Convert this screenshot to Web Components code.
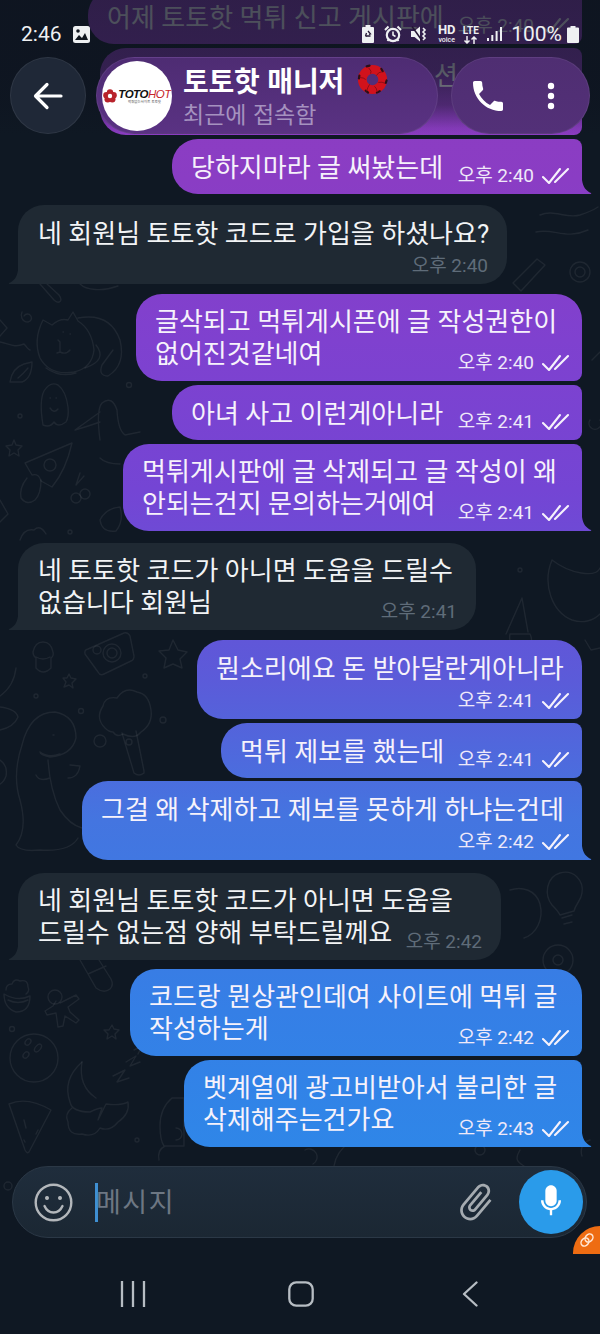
<!DOCTYPE html>
<html lang="ko">
<head>
<meta charset="utf-8">
<title>토토핫 매니저</title>
<style>
  html, body { margin: 0; padding: 0; background: #0f1823; }
  body { width: 600px; height: 1334px; overflow: hidden; font-family: "Noto Sans CJK KR", Roboto, sans-serif; }
</style>
</head>
<body>
<chat-app>
  <chat-bubble side="out" layout="inline" time="오후 2:40" style="width:494px;margin-top:0">어제 토토핫 먹튀 신고 게시판에</chat-bubble>
  <chat-bubble side="out" layout="stack" style="width:482px;margin-top:4px" notime><span style="margin-left:315px">션</span><br>&nbsp;</chat-bubble>
  <chat-bubble side="out" layout="inline" time="오후 2:40" tail style="width:410px;margin-top:4px">당하지마라 글 써놨는데</chat-bubble>

  <chat-bubble side="in" layout="below" time="오후 2:40" tail style="width:489px;margin-top:11px">네 회원님 토토핫 코드로 가입을 하셨나요?</chat-bubble>

  <chat-bubble side="out" layout="stack" time="오후 2:40" first style="width:446px;margin-top:10px">글삭되고 먹튀게시픈에 글 작성권한이<br>없어진것같네여</chat-bubble>
  <chat-bubble side="out" layout="inline" time="오후 2:41" style="width:410px;margin-top:4px">아녀 사고 이런게아니라</chat-bubble>
  <chat-bubble side="out" layout="stack" time="오후 2:41" tail style="width:459px;margin-top:4px">먹튀게시판에 글 삭제되고 글 작성이 왜<br>안되는건지 문의하는거에여</chat-bubble>

  <chat-bubble side="in" layout="stack" time="오후 2:41" tail style="width:458px;margin-top:12px">네 토토핫 코드가 아니면 도움을 드릴수<br>없습니다 회원님</chat-bubble>

  <chat-bubble side="out" layout="below" time="오후 2:41" first style="width:385px;margin-top:10px">뭔소리에요 돈 받아달란게아니라</chat-bubble>
  <chat-bubble side="out" layout="inline" time="오후 2:41" style="width:361px;margin-top:4px">먹튀 제보를 했는데</chat-bubble>
  <chat-bubble side="out" layout="below" time="오후 2:42" tail style="width:500px;margin-top:3px">그걸 왜 삭제하고 제보를 못하게 하냐는건데</chat-bubble>

  <chat-bubble side="in" layout="stack" time="오후 2:42" tail style="width:483px;margin-top:13px">네 회원님 토토핫 코드가 아니면 도움을<br>드릴수 없는점 양해 부탁드릴께요</chat-bubble>

  <chat-bubble side="out" layout="stack" time="오후 2:42" first style="width:452px;margin-top:9px">코드랑 뭔상관인데여 사이트에 먹튀 글<br>작성하는게</chat-bubble>
  <chat-bubble side="out" layout="stack" time="오후 2:43" tail style="width:398px;margin-top:4px">벳계열에 광고비받아서 불리한 글<br>삭제해주는건가요</chat-bubble>
</chat-app>

<template id="tpl-app">
  <style>
    :host { display: flex; flex-direction: column; position: relative; width: 600px; height: 1334px; overflow: hidden; background: #0f1823; color: #fff; font-family: "Noto Sans CJK KR", Roboto, sans-serif; }
    .list { flex: 1; min-height: 0; position: relative; display: flex; flex-direction: column; justify-content: flex-end; padding: 0 18px 19px; box-sizing: border-box; overflow: hidden; }
    .dim { position: absolute; left: 0; right: 0; top: 0; height: 136px; background: linear-gradient(to bottom, rgba(14,20,32,.74) 0, rgba(14,20,32,.70) 70px, rgba(14,20,32,.5) 105px, rgba(14,20,32,.08) 128px, rgba(14,20,32,0) 136px); }
    .tab { position: absolute; right: 0; top: 1226px; width: 27px; height: 28px; background: #ee6c12; border-radius: 28px 0 0 0; display: flex; align-items: center; justify-content: center; }
  </style>
  <chat-wallpaper></chat-wallpaper>
  <div class="list"><slot></slot></div>
  <chat-input></chat-input>
  <nav-bar></nav-bar>
  <div class="dim"></div>
  <status-bar></status-bar>
  <chat-header></chat-header>
  <div class="tab">
    <svg width="18" height="18" viewBox="0 0 18 18" fill="none" stroke="#ffe9d8" stroke-width="1.5"><ellipse cx="7" cy="11" rx="3.6" ry="4.4" transform="rotate(40 7 11)"/><ellipse cx="11" cy="7" rx="3.6" ry="4.4" transform="rotate(40 11 7)"/></svg>
  </div>
</template>

<template id="tpl-wallpaper">
  <style>
    :host { position: absolute; inset: 0; display: block; pointer-events: none; }
    svg { display: block; }
  </style>
  <svg width="600" height="1334" viewBox="0 0 600 1334" fill="none" stroke="#fff" stroke-opacity=".065" stroke-width="1.4" stroke-linecap="round" stroke-linejoin="round">
    <!-- top left scraps -->
    <path d="M40 284l14 16c4 4 10 2 5-5l-12-11"/><path d="M80 284c6 6 22 8 38 2"/>
    <path d="M24 316a4 4 0 1 1 4 6c-6 0-8-6-6-10"/><path d="M0 342c10 2 14 6 24 2 4 4 3 5 6 6"/><path d="M0 320l7 8-7 8"/>
    <!-- cat -->
    <path d="M43 320l9 5q8-7 16-5l5-8 5 9q14 9 16 29-2 18-20 22-24 4-34-14-7-18 3-38z"/><path d="M78 318q32-6 42 22 6 25-12 36-10 0-6-11l11-15M96 345q12 15-11 23M46 368q14 10 30 5"/><path d="M58 340l2 2v10l-3 1M60 352q6 3 10-2M63 332h.5M70 334h.5"/>
    <!-- leaf, ghost, bird -->
    <path d="M10 382q2-14 14-18l8-2q0 16-10 20zM18 378q5-4 10-10"/>
    <path d="M43 425q-4-24 1-34 6-10 14-6 8 6 10 22 1 10-2 15-8 6-12 0-4 6-11 3zM50 398h.5M56 398h.5M50 408q4 6 8 1"/>
    <path d="M100 440q-4-30 2-37 10-8 15 7 1 20 8 25l15-3M100 412L75 430q14-4 25-8M100 458q6 6 20 6"/>
    <circle cx="20" cy="416" r="2"/><circle cx="129" cy="385" r="2.5"/><circle cx="70" cy="532" r="2"/>
    <!-- pizza, cherry, star -->
    <path d="M25 463l47-20q-6 27-20 44l-11-6q-2-8-9-6-3-5-7-12z"/><circle cx="50" cy="465" r="6"/><path d="M27 478q-8 10-6 20 6 8 14 2 6-6 6-20"/>
    <path d="M80 473l-4 12M84 476l-8 9"/><circle cx="76" cy="498" r="5"/><circle cx="85" cy="494" r="5"/>
    <path d="M14 440l2 5 6 1-4 4 1 6-5-3-5 3 1-6-4-4 6-1z"/>
    <path d="M100 520q6-12 20-13 4 14-4 24-14 2-16-11zM20 540q4-12 14-10 6-6 12 4"/>
    <path d="M0 500l8 14-8 8"/>
    <!-- scraps right top -->
    <path d="M540 215c14-6 26 4 40 0 6-2 12-4 18-8M536 232c18-4 30 8 52-2"/><path d="M513 283l24-24 8 6-24 26z"/><circle cx="580" cy="272" r="10"/><circle cx="580" cy="272" r="5"/>
    <!-- camera, mug, stars -->
    <path d="M88 649l36-16q4-1 6 3l4 20q0 4-3 5l-27 13q-4 2-6-2L85 654q-1-4 3-5z"/><circle cx="112" cy="653" r="9"/><circle cx="112" cy="653" r="5"/><circle cx="97" cy="650" r="4"/>
    <path d="M33 652q2-10 10-10t10 10q1 4-2 6v10q-8 8-15 0v-10q-3-2-3-6zM36 657q7 4 14 0"/>
    <path d="M69 674l2 4 5 1-4 4 1 5-4-3-5 2 2-5-3-4 4 0z"/><path d="M173 640l5 10 9 2-7 7 2 9-9-4-9 4 2-10-7-7 10-1z"/>
    <circle cx="36" cy="696" r="2"/><circle cx="81" cy="711" r="2.500"/><circle cx="163" cy="720" r="3"/><circle cx="145" cy="676" r="2"/>
    <path d="M0 707q16 2 18 10-4 10-18 13M16 668q-2 18-16 28"/>
    <!-- dino -->
    <path d="M22 745q8-33 33-33 21 4 21 26-4 17-26 19-10-2-10-5M22 745q-10 30-2 55 8 30-4 45 4 7 24 5 30 2 38-12M48 760q2 30 12 50 10 15 22 18M70 765l10 1q-2 12-12 12M36 775q3 7 14 3M53 735h1M40 752q8 6 20 2"/>
    <path d="M0 760q8 6 6 16-2 6-6 8"/>
    <!-- cloud stick -->
    <path d="M105 728q-10-10-2-22 2-10 14-8 8-12 20-6 12 2 14 18 2 14-10 22-6 8-18 2-6 4-10-2-4 0-8-4z"/><path d="M122 733l12 40q5 4 10 0l0-2-8-40"/><circle cx="100" cy="741" r="6"/><circle cx="129" cy="742" r="3"/>
    <!-- right side -->
    <path d="M528 632l-6-34-16 36M510 634c-2 10 4 18 12 16s12-8 8-16zM552 560c18 14 44 18 48 8M552 560c-10 24 0 52 20 60 12 4 22 0 28-6"/>
    <circle cx="520" cy="570" r="2"/><path d="M585 640l6 10 9-2"/>
    <!-- bulb / ball -->
    <path d="M552 905c-8-10-6-28 8-32 14-4 24 8 22 20-1 8-6 10-8 18l-14 4c-2-4-4-6-8-10zM562 918l10-3M564 924l8-2"/>
    <circle cx="558" cy="960" r="15"/><circle cx="558" cy="960" r="5"/>
    <path d="M510 890c12-4 26 0 30 14 4 16-4 30-16 34"/>
    <!-- cupcake, gingerbread, capsule -->
    <path d="M6 990q0-6 6-6 2-6 8-3 8-2 8 6 2 4-2 7M4 994q0 14 12 18 14 0 14-16-12 6-26-2zM8 1000q10 5 20 0"/>
    <circle cx="55" cy="997" r="7"/><path d="M60 1003l16-8 3 4-11 8 2 5 9 8-3 3-11-7-2 10-5 1-2-14-9 2-2-4 8-5 3-5"/>
    <path d="M80 960l16 28q8 6 14 1 4-4 1-10l-12-19M88 974l18-8"/>
    <path d="M112 1025l2 4 5 1-4 4 1 5-4-3-5 3 1-5-4-4 5 0z"/><circle cx="12" cy="1029" r="2.500"/>
    <circle cx="34" cy="1058" r="24"/><ellipse cx="28" cy="1042" rx="2.500" ry="3.500" transform="rotate(40 28 1042)"/><ellipse cx="38" cy="1048" rx="2.500" ry="4.500" transform="rotate(40 38 1048)"/><ellipse cx="26" cy="1055" rx="2.500" ry="3.500" transform="rotate(40 26 1055)"/>
    <!-- moon, zzz, cloud -->
    <path d="M82 1062q-20 18-12 40 2 10 20 10 8-4 12-4l-4 12 8-16q14 2 22-2 2 12-10 20-8 10-18 6-6 10-18 6-14 2-14-12-4-8 4-14"/><path d="M82 1062q-4 24 14 36"/>
    <path d="M113 1076l12-6-8 12 12-4M126 1062l10-6-6 10 10-4M134 1050l8-4-4 8"/>
    <path d="M9 1104q18-8 42 6l-22 42q-2 2-4-2zM24 1120l2 8M38 1130l-2 4M24 1140l1 2"/>
    <path d="M172 1098q-12 10-12 28 0 14 4 20h20v-48zM176 1128a6 6 0 1 1 0 12M165 1146q-8 4-6 14"/>
    <circle cx="137" cy="1140" r="2"/>
    <circle cx="8" cy="1186" r="4"/><circle cx="480" cy="1150" r="5"/><path d="M305 1150a8 8 0 1 1 8 14M520 1150c-6 10-2 12 4 16M350 1142q-14 10-16 24"/>
    <path d="M590 1140c-8 2-10 10-8 16M592 360l8-8M590 420a6 6 0 1 0 10 0"/>
  </svg>
</template>

<template id="tpl-bubble">
  <style>
    :host { display: block; flex: none; position: relative; box-sizing: border-box; font-size: 26px; line-height: 32px; color: #f6f2fb; white-space: nowrap; font-family: Roboto, "Noto Sans CJK KR", sans-serif; }
    :host([side="out"]) { align-self: flex-end; }
    :host([side="in"]) { align-self: flex-start; }
    .b { display: flex; box-sizing: border-box; padding: 13px 12px 10px 19px; border-radius: 26px 8px 8px 26px; }
    :host([side="out"]) .b { background: linear-gradient(to bottom, #8f3cbe 0, #8a3dc4 180px, #7f41cf 340px, #7445d4 490px, #5b5bd9 680px, #4475e0 820px, #357fe6 1010px, #2f86e8 1147px) fixed; }
    :host([side="in"]) .b { background: #1f2933; padding: 13px 19px 10px 20px; border-radius: 26px; color: #f2f4f6; }
    :host([first]) .b { border-top-right-radius: 26px; }
    :host([side="out"][tail]) .b { border-bottom-right-radius: 0; }
    :host([side="in"][tail]) .b { border-bottom-left-radius: 0; }
    .b.inline { flex-direction: row; justify-content: space-between; }
    .b.below, .b.stack { flex-direction: column; }
    .stack .text { margin: -1px 0 1px; }
    .meta { flex: none; display: flex; align-items: center; align-self: flex-end; gap: 8px; height: 24px; margin-bottom: -4px; font-size: 19px; line-height: 24px; color: #efe9f9; }
    .below .meta { margin-top: 4px; }
    .stack .meta { margin-top: -20px; }
    :host([side="in"]) .meta { color: #5f6c79; }
    :host([notime]) .meta { visibility: hidden; }
    :host([side="in"]) svg { display: none; }
    .tail { display: none; position: absolute; bottom: 0; width: 10px; height: 14px; }
    :host([tail]) .tail { display: block; }
    :host([side="out"]) .tail { left: 100%; background: linear-gradient(to bottom, #8f3cbe 0, #8a3dc4 180px, #7f41cf 340px, #7445d4 490px, #5b5bd9 680px, #4475e0 820px, #357fe6 1010px, #2f86e8 1147px) fixed; clip-path: path("M0 0C1 7 4 11 9 13Q10 14 8 14L0 14Z"); }
    :host([side="in"]) .tail { right: 100%; background: #1f2933; clip-path: path("M10 0C9 7 6 11 1 13Q0 14 2 14L10 14Z"); }
  </style>
  <div class="b" part="bubble">
    <div class="text"><slot></slot></div>
    <div class="meta"><span class="time"></span>
      <svg width="28" height="18" viewBox="0 0 28 18" fill="none" stroke="#f6f2fc" stroke-width="2.100" stroke-linecap="round" stroke-linejoin="round"><path d="M1 10l6 6L18 2"/><path d="M13 15L26 2"/></svg>
    </div>
  </div>
  <div class="tail"></div>
</template>

<template id="tpl-status">
  <style>
    :host { position: absolute; left: 0; right: 0; top: 20px; height: 28px; display: flex; align-items: center; padding: 0 21px; box-sizing: border-box; color: #eef0f2; font-family: Roboto, sans-serif; font-size: 21px; }
    .t { margin-right: 11px; }
    .sp { flex: 1; }
    .icons { display: flex; align-items: center; }
    svg { display: block; flex: none; }
    .hd { display: flex; flex-direction: column; align-items: center; width: 19px; margin-left: 9px; font-weight: 700; font-size: 13px; line-height: 13px; margin-top: -1px; }
    .hd small { font-size: 7px; line-height: 8px; font-weight: 500; }
    .lte { display: flex; flex-direction: column; align-items: center; width: 17px; margin-left: 6px; font-size: 10px; line-height: 11px; font-weight: 700; }
    .pct { margin-left: 9px; font-size: 21px; }
  </style>
  <span class="t">2:46</span>
  <svg width="17" height="17" viewBox="0 0 17 17"><rect width="17" height="17" rx="2.5" fill="#eef0f2"/><circle cx="5" cy="5" r="1.8" fill="#10161f"/><path d="M2 14l4-5 3 3 3-5 3 7z" fill="#10161f"/></svg>
  <span class="sp"></span>
  <div class="icons">
    <svg width="12" height="18" viewBox="0 0 12 18"><path d="M3.500 0h5v2H11a1 1 0 0 1 1 1v14a1 1 0 0 1-1 1H1a1 1 0 0 1-1-1V3a1 1 0 0 1 1-1h2.500z" fill="#eef0f2"/><path d="M6 6l2.500 3-1.500.5M3.500 11l1-3M8.500 11H5l-1.500.4" fill="none" stroke="#241634" stroke-width="1.300"/></svg>
    <svg style="margin-left:10px" width="18" height="18" viewBox="0 0 18 18" fill="none" stroke="#eef0f2"><circle cx="9" cy="10" r="6.200" stroke-width="2.200"/><path d="M9 6.500V10l2.500 1.500" stroke-width="1.600"/><path d="M1 5l3.500-3.500M17 5l-3.500-3.500M3.500 16l1.500-2M14.500 16L13 14" stroke-width="2"/></svg>
    <svg style="margin-left:8px" width="18" height="18" viewBox="0 0 18 18" fill="#eef0f2"><path d="M1 6h3.500L10 1.500V16.500L4.500 12H1z"/><path d="M2 1.500l10 14" stroke="#241634" stroke-width="1.500"/><path d="M13 3l2 2-2 2 2 2-2 2 2 2-2 2" fill="none" stroke="#eef0f2" stroke-width="1.600"/></svg>
    <div class="hd">HD<small>voice</small></div>
    <div class="lte">LTE
      <svg width="15" height="8" viewBox="0 0 15 8" fill="none" stroke="#eef0f2" stroke-width="1.500"><path d="M4 0v7M1.500 4.500L4 7l2.500-2.500M11 8V1M8.500 3.500L11 1l2.500 2.500"/></svg>
    </div>
    <svg style="margin-left:8px" width="15" height="15" viewBox="0 0 15 15" fill="#eef0f2"><rect x="0" y="11" width="2" height="3"/><rect x="4.300" y="8" width="2" height="6"/><rect x="8.600" y="4" width="2" height="10"/><rect x="13" y="0" width="2" height="14"/></svg>
    <span class="pct">100%</span>
    <svg style="margin-left:5px" width="12" height="17" viewBox="0 0 12 17"><path d="M3.500 0h5v1.500H11a1 1 0 0 1 1 1V16a1 1 0 0 1-1 1H1a1 1 0 0 1-1-1V2.500a1 1 0 0 1 1-1h2.500z" fill="#eef0f2"/></svg>
  </div>
</template>

<template id="tpl-header">
  <style>
    :host { position: absolute; left: 10px; top: 57px; width: 580px; height: 77px; display: flex; color: #fff; font-family: "Noto Sans CJK KR", Roboto, sans-serif; }
    .round { flex: none; box-sizing: border-box; border: 1px solid rgba(255,255,255,.07); height: 77px; display: flex; align-items: center; }
    .back { width: 76px; border-radius: 50%; background: #1f2837; justify-content: center; }
    .who { width: 342px; margin-left: 10px; border-radius: 39px; background: linear-gradient(to bottom, #4e2c73, #5a3283); padding-left: 5px; gap: 11px; }
    .acts { width: 139px; margin-left: 13px; border-radius: 39px; background: linear-gradient(to bottom, #4f2e72, #533078); }
    .acts svg { flex: none; }
    .avatar { flex: none; width: 70px; height: 70px; border-radius: 50%; background: #fff; overflow: hidden; display: flex; align-items: center; justify-content: center; gap: 1px; color: #111; font-family: "Liberation Sans", sans-serif; }
    .logo { display: flex; flex-direction: column; align-items: center; }
    .mark { font-size: 11.500px; line-height: 12px; font-weight: 700; font-style: italic; letter-spacing: -.5px; }
    .mark b { color: #c7242b; font-weight: 400; }
    .tiny { font-size: 3.500px; line-height: 4px; color: #555; font-family: "Noto Sans CJK KR", sans-serif; }
    .names { display: flex; flex-direction: column; }
    .title { display: flex; align-items: center; gap: 11px; font-size: 28px; line-height: 36px; font-weight: 700; height: 36px; letter-spacing: -.2px; margin-top: -2px; }
    .sub { font-size: 23px; line-height: 30px; color: #a592bf; }
  </style>
  <div class="round back">
    <svg width="30" height="28" viewBox="0 0 30 28" fill="none" stroke="#fff" stroke-width="3.200" stroke-linecap="round" stroke-linejoin="round"><path d="M28 14H3M14 2.500L2.500 14 14 25.500"/></svg>
  </div>
  <div class="round who">
    <div class="avatar">
      <svg width="14" height="14" viewBox="0 0 14 14"><g fill="#b8232b"><circle cx="7" cy="3.500" r="3.200"/><circle cx="3.400" cy="6.200" r="3.200"/><circle cx="10.600" cy="6.200" r="3.200"/><circle cx="4.700" cy="10.300" r="3.200"/><circle cx="9.300" cy="10.300" r="3.200"/></g><circle cx="7" cy="7" r="2.200" fill="#fff"/></svg>
      <div class="logo">
        <div class="mark">TOTO<b>HOT</b></div>
        <div class="tiny">먹튀없는사이트 토토핫</div>
      </div>
    </div>
    <div class="names">
      <div class="title"><span>토토핫 매니저</span>
        <svg width="35" height="35" viewBox="0 0 36 36" fill="none"><path d="M18 3a15 15 0 1 1 0 30 15 15 0 0 1 0-30zm0 9a6 6 0 1 0 0 12 6 6 0 0 0 0-12z" fill="#d1121c" fill-rule="evenodd"/><g stroke="#2a0f18" stroke-width="2.200" stroke-linecap="round"><path d="M12 4.500l3-.8"/><path d="M27 7l1.500 2.500"/><path d="M32.500 19l-.8 2.500"/><path d="M25.500 30l-3 1.500"/><path d="M11 29.500l2.500 2"/><path d="M4.500 14l-.5 3"/></g><g stroke="#8a0c16" stroke-width="1"><path d="M14 6q4 4 2 6M28 10q-4 0-6 4M31 22q-3-2-7-1M23 31q-1-5-3-6M12 30q1-4 3-7M5 16q4 0 6 2"/></g></svg>
      </div>
      <div class="sub">최근에 접속함</div>
    </div>
  </div>
  <div class="round acts">
    <svg style="margin-left:21px" width="30" height="30" viewBox="3 3 18 18" fill="#fff"><path d="M6.620 10.790c1.440 2.830 3.760 5.140 6.590 6.590l2.200-2.200c.270-.270.670-.360 1.020-.240 1.120.370 2.330.570 3.570.570.550 0 1 .450 1 1V20c0 .550-.450 1-1 1-9.390 0-17-7.610-17-17 0-.550.450-1 1-1h3.500c.550 0 1 .450 1 1 0 1.250.200 2.450.570 3.570.110.350.030.740-.250 1.020l-2.200 2.200z"/></svg>
    <svg style="margin-left:43px" width="10" height="30" viewBox="0 0 10 30" fill="#fff"><circle cx="5" cy="5" r="3.200"/><circle cx="5" cy="15" r="3.200"/><circle cx="5" cy="25" r="3.200"/></svg>
  </div>
</template>

<template id="tpl-input">
  <style>
    :host { flex: none; position: relative; display: flex; align-items: center; box-sizing: border-box; width: 575px; height: 72px; margin-left: 12px; border-radius: 36px; background: linear-gradient(to bottom, #1f2d3c, #1b2733); border: 1px solid #2b3846; color: #fff; font-family: "Noto Sans CJK KR", Roboto, sans-serif; }
    .smile { margin-left: 21px; flex: none; }
    .caret { flex: none; width: 3px; height: 39px; background: #3f8fd2; margin-left: 22px; }
    .ph { flex: 1; font-size: 27px; line-height: 36px; color: #6d7783; letter-spacing: 1.500px; margin-top: -2px; margin-left: -2px; }
    .clip { flex: none; margin-right: 21px; }
    .mic { flex: none; width: 64px; height: 64px; border-radius: 50%; background: #2a9bea; margin-right: 3px; display: flex; align-items: center; justify-content: center; }
  </style>
  <svg class="smile" width="39" height="39" viewBox="0 0 39 39" fill="none" stroke="#b3b7bb" stroke-width="2.400" stroke-linecap="round"><circle cx="19.500" cy="19.500" r="17.800"/><path d="M10.500 23c2 4.500 5.500 6.500 9 6.500s7-2 9-6.500"/><circle cx="13" cy="15" r="1.400" fill="#b3b7bb" stroke-width="1.200"/><circle cx="26" cy="15" r="1.400" fill="#b3b7bb" stroke-width="1.200"/></svg>
  <span class="caret"></span>
  <span class="ph">메시지</span>
  <svg class="clip" width="44" height="44" viewBox="0 0 24 24" fill="#a5abb0" style="transform:rotate(40deg)"><path d="M16.500 6v11.500c0 2.210-1.790 4-4 4s-4-1.790-4-4V5c0-1.380 1.120-2.500 2.500-2.500s2.500 1.120 2.500 2.500v10.500c0 .550-.450 1-1 1s-1-.450-1-1V6H10v9.500c0 1.380 1.120 2.500 2.500 2.500s2.500-1.120 2.500-2.500V5c0-2.210-1.790-4-4-4S7 2.790 7 5v12.500c0 3.040 2.460 5.500 5.500 5.500s5.500-2.460 5.500-5.500V6h-1.500z"/></svg>
  <div class="mic">
    <svg width="40" height="40" viewBox="0 0 24 24" fill="#fff"><path d="M12 14.500c1.900 0 3.400-1.500 3.400-3.400V5.400C15.400 3.500 13.900 2 12 2S8.600 3.500 8.600 5.400v5.700c0 1.900 1.500 3.400 3.400 3.400z"/><path d="M18 11h-1.500c0 2.600-2.100 4.600-4.500 4.600S7.500 13.600 7.500 11H6c0 3.100 2.400 5.600 5.300 6V20h1.400v-3c2.900-.4 5.300-2.900 5.300-6z"/></svg>
  </div>
</template>

<template id="tpl-nav">
  <style>
    :host { flex: none; display: flex; align-items: flex-start; height: 96px; padding-top: 43px; box-sizing: border-box; position: relative; }
    .slot { flex: none; display: flex; justify-content: center; }
    svg { display: block; }
  </style>
  <div class="slot" style="width:266px"><svg width="26" height="26" viewBox="0 0 26 26" stroke="#b7bdc3" stroke-width="2.300" fill="none"><path d="M2 0v26M13 0v26M24 0v26"/></svg></div>
  <div class="slot" style="width:70px"><svg width="26" height="26" viewBox="0 0 26 26" fill="none" stroke="#b7bdc3" stroke-width="2.300"><rect x="1.300" y="1.300" width="23.400" height="23.400" rx="7"/></svg></div>
  <div class="slot" style="width:268px"><svg width="16" height="26" viewBox="0 0 16 26" fill="none" stroke="#b7bdc3" stroke-width="2.300" stroke-linecap="round" stroke-linejoin="round"><path d="M14.500 1.500L2 13l12.500 11.500"/></svg></div>
</template>

<script>
(function registerChatScreen() {
  'use strict';

  function simple(name, tplId, setup) {
    class Simple extends HTMLElement {
      constructor() {
        super();
        this.attachShadow({ mode: 'open' });
        this.shadowRoot.appendChild(document.getElementById(tplId).content.cloneNode(true));
      }
      connectedCallback() {
        if (setup) setup(this);
      }
    }
    customElements.define(name, Simple);
  }

  simple('chat-wallpaper', 'tpl-wallpaper');
  simple('status-bar', 'tpl-status');
  simple('chat-header', 'tpl-header');
  simple('chat-input', 'tpl-input');
  simple('nav-bar', 'tpl-nav');
  simple('chat-app', 'tpl-app');

  simple('chat-bubble', 'tpl-bubble', (el) => {
    const root = el.shadowRoot;
    root.querySelector('.b').classList.add(el.getAttribute('layout') || 'inline');
    root.querySelector('.time').textContent = el.getAttribute('time') || '';
  });
})();
</script>
</body>
</html>
